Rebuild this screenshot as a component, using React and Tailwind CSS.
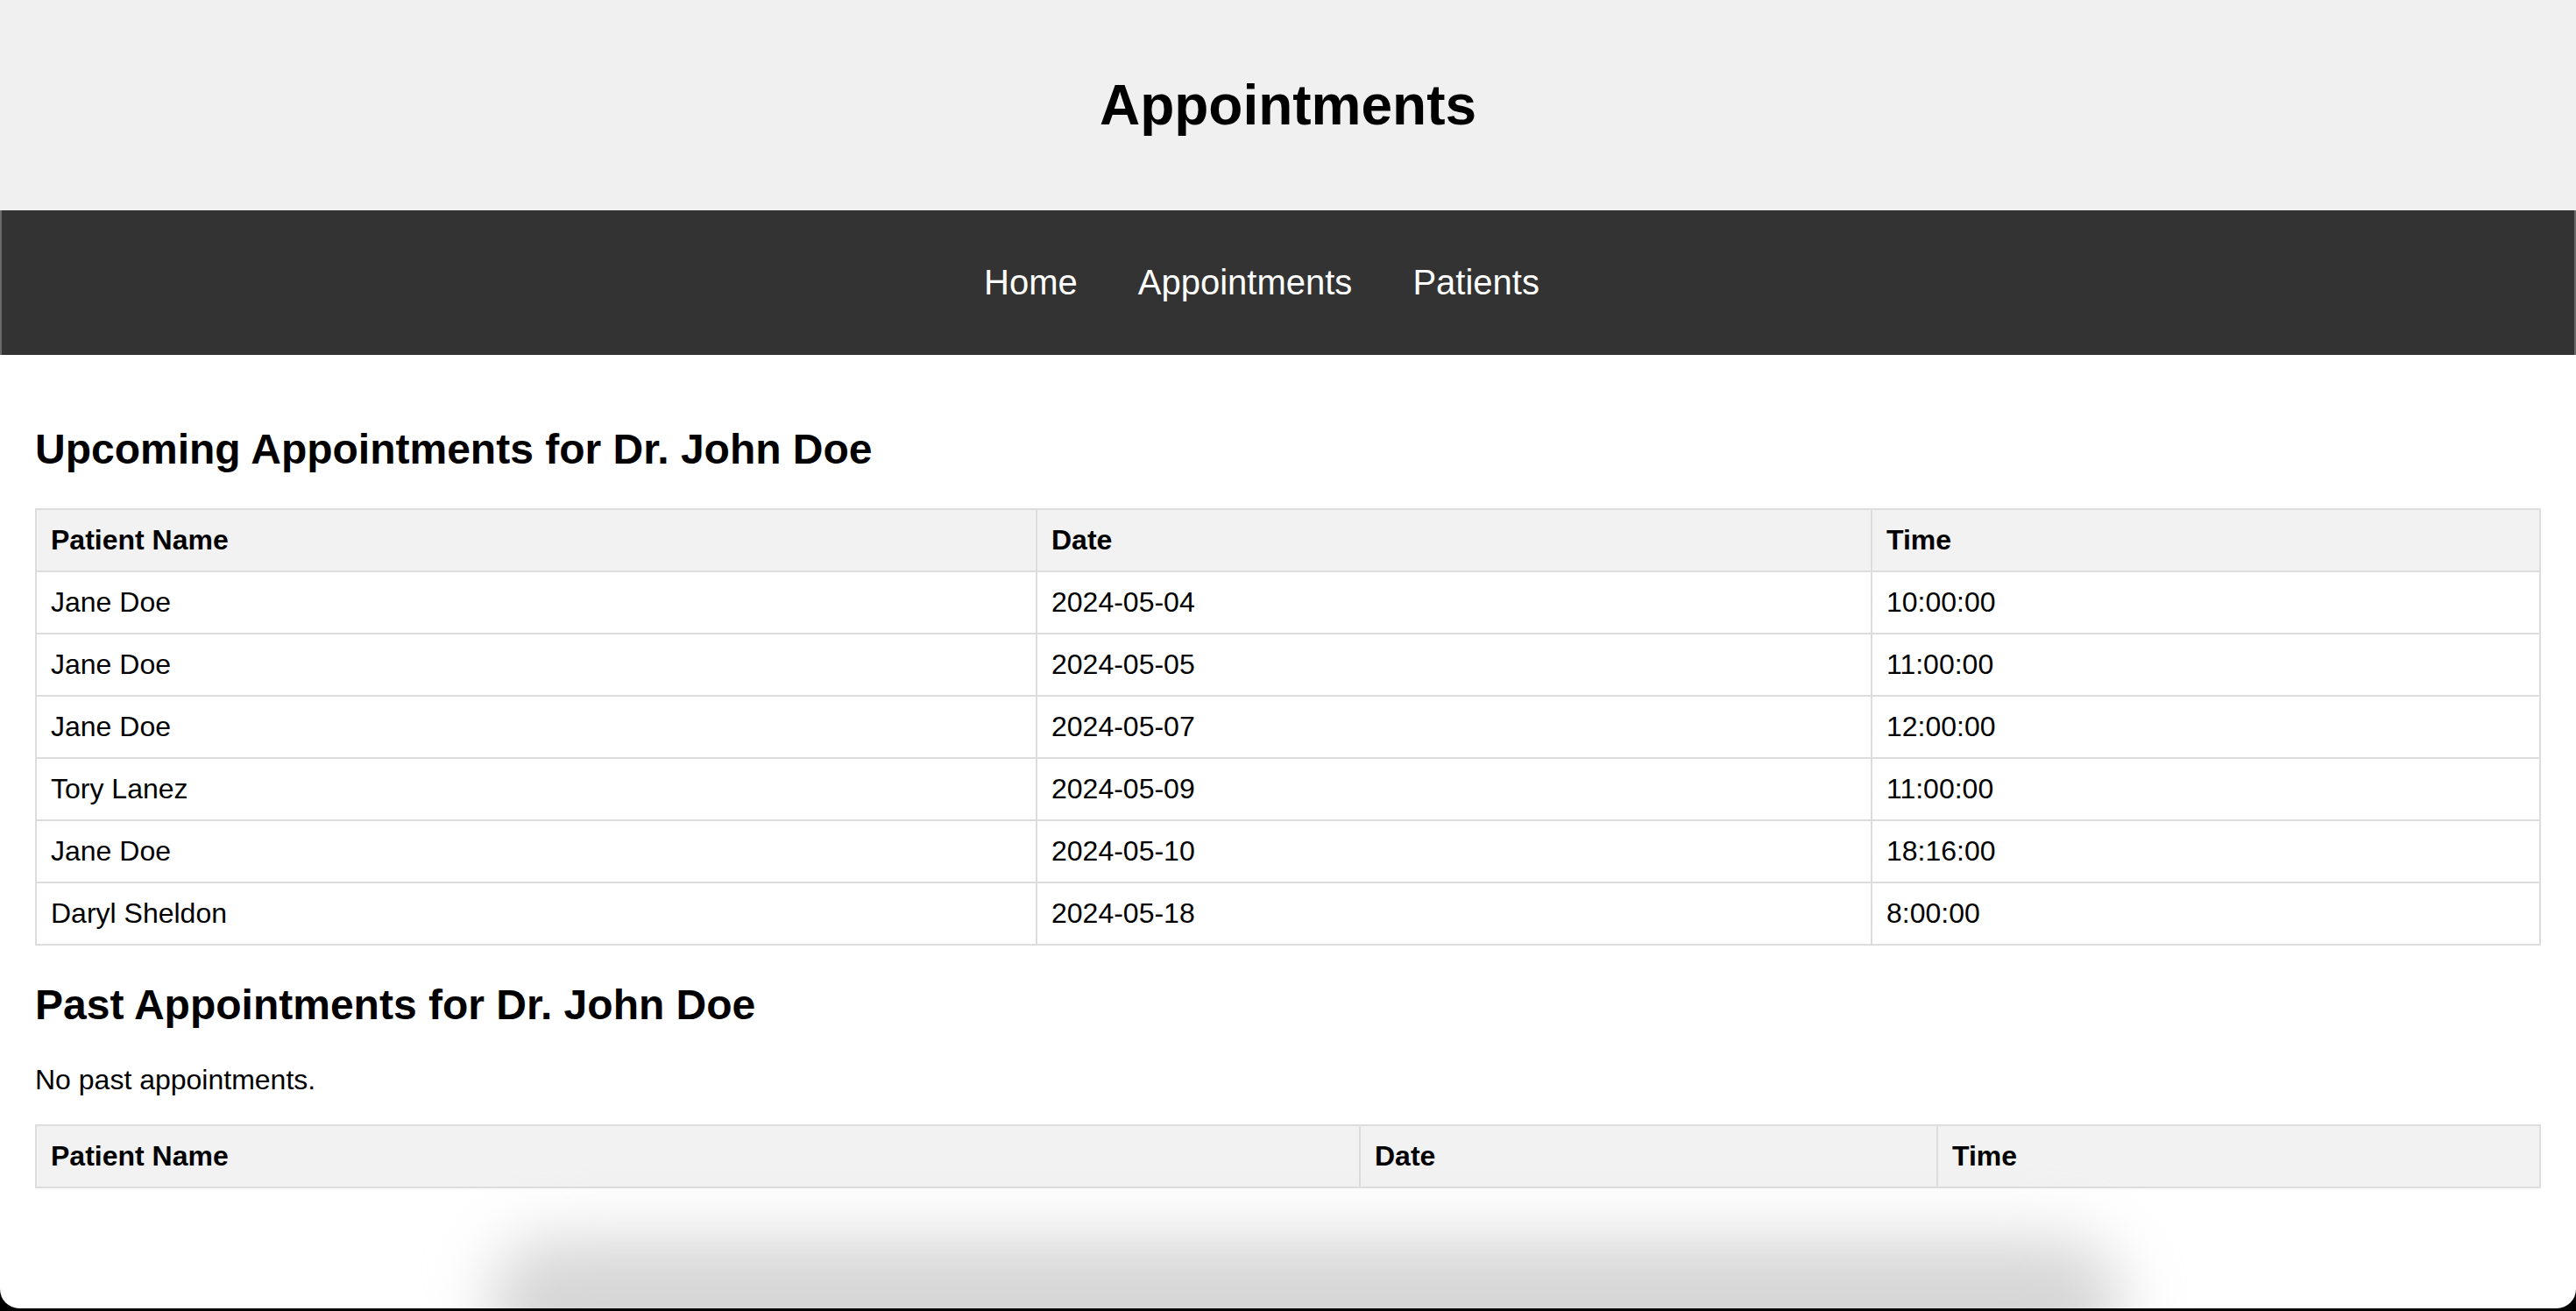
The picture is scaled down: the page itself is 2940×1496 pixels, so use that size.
import React from 'react';

const upcoming = [
  { name: 'Jane Doe', date: '2024-05-04', time: '10:00:00' },
  { name: 'Jane Doe', date: '2024-05-05', time: '11:00:00' },
  { name: 'Jane Doe', date: '2024-05-07', time: '12:00:00' },
  { name: 'Tory Lanez', date: '2024-05-09', time: '11:00:00' },
  { name: 'Jane Doe', date: '2024-05-10', time: '18:16:00' },
  { name: 'Daryl Sheldon', date: '2024-05-18', time: '8:00:00' },
];

const cell = 'border-2 border-[#ddd] px-4 py-4 text-left';

function HeadRow() {
  return (
    <tr className="bg-[#f2f2f2]">
      <th className={cell}>Patient Name</th>
      <th className={cell}>Date</th>
      <th className={cell}>Time</th>
    </tr>
  );
}

export default function App() {
  return (
    <div className="w-[2940px] h-[1496px] bg-black font-['Liberation_Sans',Arial,sans-serif] leading-[normal] text-black">
      <div className="relative h-[1493px] bg-white rounded-b-[22px] overflow-hidden">
        {/* Header */}
        <header className="h-[240px] bg-[#f0f0f0] flex items-center justify-center">
          <h1 className="text-[64px] font-bold">Appointments</h1>
        </header>

        {/* Nav */}
        <nav className="h-[165px] bg-[#333] border-x-2 border-[#6a6a6a] flex items-center justify-center gap-[69px] pr-[60px] text-white text-[40px]">
          <a>Home</a>
          <a>Appointments</a>
          <a>Patients</a>
        </nav>

        <main className="px-[40px] pt-[80px] pb-[40px] text-[32px]">
          <h2 className="text-[48px] font-bold mb-[40px]">Upcoming Appointments for Dr. John Doe</h2>
          <table className="w-full table-fixed border-collapse">
            <colgroup>
              <col className="w-[1142px]" />
              <col className="w-[953px]" />
              <col />
            </colgroup>
            <thead>
              <HeadRow />
            </thead>
            <tbody>
              {upcoming.map((a, i) => (
                <tr key={i}>
                  <td className={cell}>{a.name}</td>
                  <td className={cell}>{a.date}</td>
                  <td className={cell}>{a.time}</td>
                </tr>
              ))}
            </tbody>
          </table>

          <h2 className="text-[48px] font-bold mt-[40px] mb-[40px]">Past Appointments for Dr. John Doe</h2>
          <p className="mb-[32px]">No past appointments.</p>
          <table className="w-full table-fixed border-collapse">
            <colgroup>
              <col className="w-[1511px]" />
              <col className="w-[659px]" />
              <col />
            </colgroup>
            <thead>
              <HeadRow />
            </thead>
          </table>
        </main>

        {/* dock shadow */}
        <div className="absolute left-[560px] right-[520px] bottom-[-90px] h-[170px] rounded-[70px] bg-[#d6d6d6] blur-[36px]" />
      </div>
    </div>
  );
}
